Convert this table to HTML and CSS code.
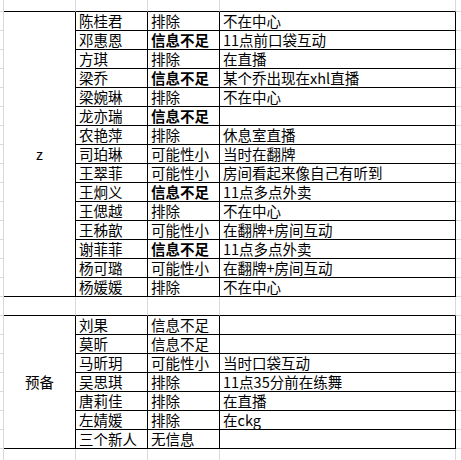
FILE: index.html
```html
<!DOCTYPE html>
<html lang="zh">
<head>
<meta charset="utf-8">
<title>名单</title>
<link rel="stylesheet" href="styles.css">
</head>
<body>
<table class="sheet">
  <colgroup>
    <col class="c0"><col class="ca"><col class="cb"><col class="cc"><col class="cd"><col class="ce">
  </colgroup>
  <tbody>
    <tr class="edge">
      <td class="m"></td><td class="g top"></td><td class="g top"></td><td class="g top"></td><td class="g top"></td><td class="e"></td>
    </tr>
    <tr>
      <td class="m"></td><td class="grp" rowspan="15">z</td>
      <td class="d">陈桂君</td><td class="d">排除</td><td class="d">不在中心</td><td class="e"></td>
    </tr>
    <tr><td class="m"></td><td class="d">邓惠恩</td><td class="d b">信息不足</td><td class="d">11点前口袋互动</td><td class="e"></td></tr>
    <tr><td class="m"></td><td class="d">方琪</td><td class="d">排除</td><td class="d">在直播</td><td class="e"></td></tr>
    <tr><td class="m"></td><td class="d">梁乔</td><td class="d b">信息不足</td><td class="d">某个乔出现在xhl直播</td><td class="e"></td></tr>
    <tr><td class="m"></td><td class="d">梁婉琳</td><td class="d">排除</td><td class="d">不在中心</td><td class="e"></td></tr>
    <tr><td class="m"></td><td class="d">龙亦瑞</td><td class="d b">信息不足</td><td class="d"></td><td class="e"></td></tr>
    <tr><td class="m"></td><td class="d">农艳萍</td><td class="d">排除</td><td class="d">休息室直播</td><td class="e"></td></tr>
    <tr><td class="m"></td><td class="d">司珀琳</td><td class="d">可能性小</td><td class="d">当时在翻牌</td><td class="e"></td></tr>
    <tr><td class="m"></td><td class="d">王翠菲</td><td class="d">可能性小</td><td class="d">房间看起来像自己有听到</td><td class="e"></td></tr>
    <tr><td class="m"></td><td class="d">王炯义</td><td class="d b">信息不足</td><td class="d">11点多点外卖</td><td class="e"></td></tr>
    <tr><td class="m"></td><td class="d">王偲越</td><td class="d">排除</td><td class="d">不在中心</td><td class="e"></td></tr>
    <tr><td class="m"></td><td class="d">王秭歆</td><td class="d">可能性小</td><td class="d">在翻牌+房间互动</td><td class="e"></td></tr>
    <tr><td class="m"></td><td class="d">谢菲菲</td><td class="d b">信息不足</td><td class="d">11点多点外卖</td><td class="e"></td></tr>
    <tr><td class="m"></td><td class="d">杨可璐</td><td class="d">可能性小</td><td class="d">在翻牌+房间互动</td><td class="e"></td></tr>
    <tr><td class="m"></td><td class="d">杨媛媛</td><td class="d">排除</td><td class="d">不在中心</td><td class="e"></td></tr>
    <tr>
      <td class="m"></td><td class="g top"></td><td class="g top"></td><td class="g top"></td><td class="g top"></td><td class="e"></td>
    </tr>
    <tr>
      <td class="m"></td><td class="grp" rowspan="7">预备</td>
      <td class="d">刘果</td><td class="d">信息不足</td><td class="d"></td><td class="e"></td>
    </tr>
    <tr><td class="m"></td><td class="d">莫昕</td><td class="d">信息不足</td><td class="d"></td><td class="e"></td></tr>
    <tr><td class="m"></td><td class="d">马昕玥</td><td class="d">可能性小</td><td class="d">当时口袋互动</td><td class="e"></td></tr>
    <tr><td class="m"></td><td class="d">吴思琪</td><td class="d">排除</td><td class="d">11点35分前在练舞</td><td class="e"></td></tr>
    <tr><td class="m"></td><td class="d">唐莉佳</td><td class="d">排除</td><td class="d">在直播</td><td class="e"></td></tr>
    <tr><td class="m"></td><td class="d">左婧媛</td><td class="d">排除</td><td class="d">在ckg</td><td class="e"></td></tr>
    <tr><td class="m"></td><td class="d">三个新人</td><td class="d">无信息</td><td class="d"></td><td class="e"></td></tr>
    <tr class="edge">
      <td class="m"></td><td class="g"></td><td class="g"></td><td class="g"></td><td class="g"></td><td class="e"></td>
    </tr>
  </tbody>
</table>
</body>
</html>
```

FILE: styles.css
```css
html, body {
  margin: 0;
  padding: 0;
  background: #ffffff;
  overflow: hidden;
}

.sheet {
  table-layout: fixed;
  border-collapse: separate;
  border-spacing: 0;
  width: 461px;
  font-family: "Noto Sans CJK SC", "Liberation Sans", sans-serif;
  font-size: 14.5px;
  color: #000000;
}

.c0 { width: 4px; }
.ca { width: 72px; }
.cb { width: 72px; }
.cc { width: 72px; }
.cd { width: 236px; }
.ce { width: 5px; }

.sheet tr { height: 19px; }
.sheet tr.edge { height: 12px; }

.sheet td {
  box-sizing: border-box;
  padding: 0 0 0 3px;
  line-height: 18px;
  white-space: nowrap;
  vertical-align: bottom;
  border-right: 1px solid #d9d9d9;
  border-bottom: 1px solid #d9d9d9;
}

.sheet td.m { padding: 0; }
.sheet td.e { padding: 0; border-right: 0; }

.sheet td.top { border-bottom-color: #000000; }

.sheet td.d {
  border-right-color: #000000;
  border-bottom-color: #000000;
}

.sheet td.b { font-weight: bold; }

.sheet td.grp {
  text-align: center;
  vertical-align: middle;
  padding: 0;
  border-right-color: #000000;
  border-bottom-color: #000000;
}
```
